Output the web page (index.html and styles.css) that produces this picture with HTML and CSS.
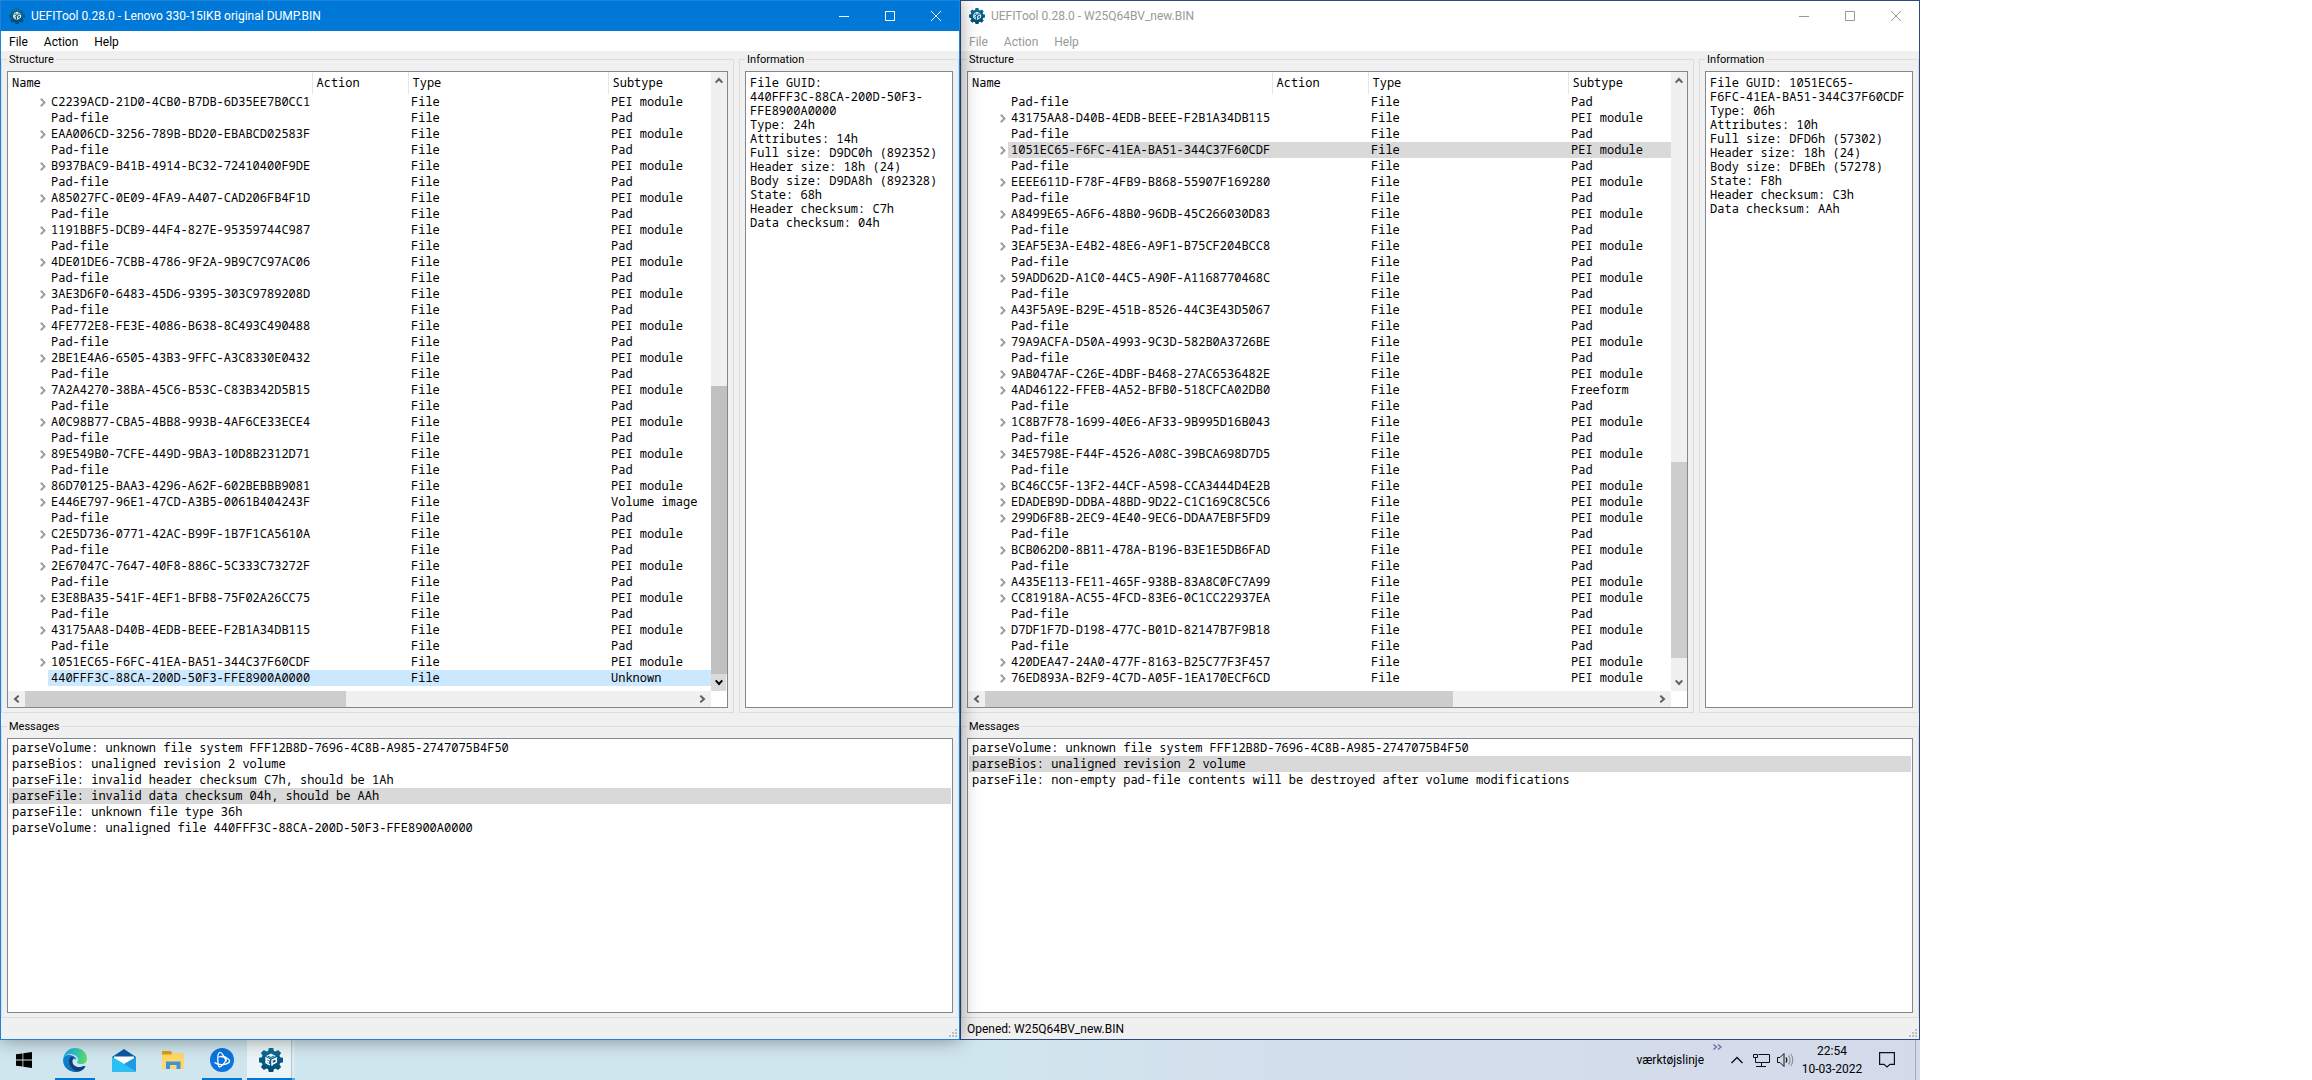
FILE: index.html
```html
<!DOCTYPE html>
<html lang="en">
<head>
<meta charset="utf-8">
<title>UEFITool</title>
<link rel="stylesheet" href="styles.css">
</head>
<body>
<svg class="defs" aria-hidden="true">
  <defs>
    <linearGradient id="gear-fill" x1="0" y1="0" x2="0" y2="1"><stop offset="0" stop-color="#0d7099"/><stop offset="1" stop-color="#004a70"/></linearGradient>
  </defs>
  <symbol id="gear" viewBox="0 0 24 24">
    <path fill="url(#gear-fill)" d="M9.8 0h4.4l.7 2.9 1.7.7L19.100 2.100l3 3-1.600 2.400.7 1.700 2.800.6v4.400l-2.800.7-.7 1.700 1.600 2.500-3 3-2.500-1.600-1.700.7-.7 2.800H9.800l-.7-2.800-1.700-.7-2.500 1.600-3-3 1.600-2.500-.7-1.700L0 14.200V9.800l2.800-.6.7-1.700L1.900 5.100l3-3 2.500 1.500 1.700-.7z"/>
    <path fill="#fff" d="M12 5.600l5 2.500-5 2.500-5-2.500z" opacity=".95"/>
    <path fill="none" stroke="#fff" stroke-width="1.500" d="M10.800 12l-3.700-1.900v4.600l3.700 2.200M7.300 12.800l3 1.400M13 17.800v-5.600l4.300-2v3.900l-3.700 1.900"/>
    <path fill="none" stroke="#0a5f87" d="M9 8.300l3 1.200 3.200-1.500"/>
  </symbol>
  <symbol id="minimize" viewBox="0 0 10 10"><path fill="none" stroke="currentColor" d="M0 5.500h10"/></symbol>
  <symbol id="maximize" viewBox="0 0 10 10"><path fill="none" stroke="currentColor" d="M.5.5h9v9h-9z"/></symbol>
  <symbol id="close" viewBox="0 0 10 10"><path fill="none" stroke="currentColor" d="M0 0l10 10M10 0L0 10"/></symbol>
  <symbol id="chevron-right" viewBox="0 0 6 9"><path fill="none" stroke="currentColor" stroke-width="2" d="M.8.8l3.700 3.700L.8 8.200"/></symbol>
  <symbol id="arrow-up" viewBox="0 0 8 7"><path fill="none" stroke="currentColor" stroke-width="2" d="M.7 5.700L4 2l3.300 3.700"/></symbol>
  <symbol id="arrow-down" viewBox="0 0 8 7"><path fill="none" stroke="currentColor" stroke-width="2" d="M.7 1.300L4 5l3.300-3.700"/></symbol>
  <symbol id="arrow-left" viewBox="0 0 7 8"><path fill="none" stroke="currentColor" stroke-width="2" d="M5.700.7L2 4l3.700 3.300"/></symbol>
  <symbol id="arrow-right" viewBox="0 0 7 8"><path fill="none" stroke="currentColor" stroke-width="2" d="M1.300.7L5 4 1.300 7.300"/></symbol>
  <symbol id="grip" viewBox="0 0 8 8"><path fill="#bfbfbf" d="M6 0h2v2H6zM3 3h2v2H3zM6 3h2v2H6zM0 6h2v2H0zM3 6h2v2H3zM6 6h2v2H6z"/></symbol>
</svg>

<div class="screen">
  <main class="desktop" id="desktop"></main>

  <footer class="taskbar">
    <nav class="apps" aria-label="Taskbar">
      <button class="app" aria-label="Start">
        <svg width="16" height="16" viewBox="0 0 16 16"><path d="M0 2.300L6.500 1.400v6.200H0zM7.300 1.300L16 0v7.600H7.300zM0 8.400h6.500v6.200L0 13.700zM7.300 8.400H16V16l-8.700-1.300z"/></svg>
      </button>
      <button class="app running" aria-label="Microsoft Edge">
        <svg width="24" height="24" viewBox="0 0 24 24">
          <defs>
            <linearGradient id="edge-a" x1="0" y1="0" x2="1" y2="0"><stop offset="0" stop-color="#1fa2e0"/><stop offset=".5" stop-color="#2cc2c9"/><stop offset="1" stop-color="#63de52"/></linearGradient>
            <linearGradient id="edge-b" x1="0" y1="0" x2="1" y2="1"><stop offset="0" stop-color="#1487d8"/><stop offset="1" stop-color="#0b5fa8"/></linearGradient>
          </defs>
          <path fill="url(#edge-b)" d="M.2 11C1.500 6.500 5.500 6.800 8 7.300c4 .8 5.500 3.200 5.300 4.600-.8-1.200-3.600-1.600-4 1-.4 3.600 3 6.300 7 6.300 2.800 0 5.200-1.700 6-1C21 21.800 17 24 12.500 24 5 24-.8 18 .2 11z"/>
          <path fill="#123f78" d="M8.400 8.500C5.500 10 5.600 15 7.500 18c1.800 3 5 5.200 8.300 5.200 3-.7 5.300-2.700 6.500-5-.8-.7-3.200 1-6 1-4 0-7.400-2.700-7-6.300.1-1.500.7-3 1.700-3.700z"/>
          <path fill="url(#edge-a)" d="M.2 11C1 4.500 6 0 12.200 0 19 0 24 5 24 10.500c0 3.600-2.600 5.600-5.700 5.600-2.600 0-4.200-.8-4.200-1.600 0-.6.900-.9.900-2.700 0-3-3-5.600-7.400-5.600C3.500 6.200.9 8.300.2 11z"/>
        </svg>
      </button>
      <button class="app" aria-label="Mail">
        <svg width="24" height="24" viewBox="0 0 24 24"><path fill="#0c59a4" d="M0 9L12 1l12 8v4H0z"/><path fill="#fff" d="M2 8.500h20V13l-10 5L2 13z"/><path fill="#35b8f1" d="M0 9l12 7L24 9v14.500H0z"/><path fill="#1f9be2" d="M0 23.500L24 9v14.500z"/><path fill="#2bc0f5" d="M0 23.500h24L9.500 14.500 0 9z"/></svg>
      </button>
      <button class="app" aria-label="File Explorer">
        <svg width="22" height="20" viewBox="0 0 22 20"><path fill="#dd9c0c" d="M0 1h8.500l1.500 2H22v4H0z"/><path fill="#ffd869" d="M0 4.500h9L10.500 3H22v16H0z"/><path fill="#3d93dc" d="M4 11.500h14.500V19h-4v-4H8v4H4z"/></svg>
      </button>
      <button class="app running" aria-label="Battle.net">
        <svg width="24" height="24" viewBox="0 0 24 24"><circle cx="12" cy="12" r="12" fill="#0b74de"/><g fill="none" stroke="#fff" stroke-width="1.300"><path d="M9 19C7 13 7.500 5.500 9.500 4.500c2-.8 5.300 4.500 6.800 9"/><path d="M4.500 14.500C8 17.300 16.500 17.300 19.300 14c1.500-2.300-3.500-5-8-5.500"/><path d="M8.500 9c4-1.200 8.800-.8 7.500 2.800-1.200 3.400-4.500 7.200-7 7.200"/></g></svg>
      </button>
      <button class="app active" aria-label="UEFITool">
        <svg width="24" height="24"><use href="#gear"/></svg>
      </button>
    </nav>
    <div class="tray">
      <span class="toolbar-name">værktøjslinje</span>
      <button class="more" aria-label="More toolbars"><svg width="9" height="6" viewBox="0 0 9 6"><path fill="none" stroke="#6d6ba8" stroke-width="1.300" d="M.5.5L3.500 3 .5 5.500M5 .5L8 3 5 5.500"/></svg></button>
      <button class="tray-icon" aria-label="Show hidden icons"><svg width="12" height="8" viewBox="0 0 12 8"><path fill="none" stroke="#111" stroke-width="1.400" d="M.5 7L6 1.500 11.500 7"/></svg></button>
      <button class="tray-icon" aria-label="Network"><svg width="17" height="14" viewBox="0 0 17 14"><path fill="none" stroke="#111" d="M5.500 1.500h11v8h-11M3 13.500h10M8.500 10v3M.5 1.500h4v3h-4zM2.500 5v4.500H6"/></svg></button>
      <button class="tray-icon" aria-label="Volume"><svg width="17" height="14" viewBox="0 0 17 14"><path fill="none" stroke="#111" d="M.5 4.500H3l4-4v13l-4-4H.5z"/><path fill="none" stroke="#111" stroke-width="1.200" d="M9 4.500c1 1.500 1 3.500 0 5"/><path fill="none" stroke="#8a90a0" stroke-width="1.200" d="M11.300 2.500c2 2.600 2 6.400 0 9M13.800 1c2.600 3.500 2.600 8.500 0 12"/></svg></button>
      <time class="clock" datetime="2022-03-10T22:54"><span>22:54</span><span>10-03-2022</span></time>
      <button class="tray-icon notices" aria-label="Notifications"><svg width="16" height="16" viewBox="0 0 16 16"><path fill="none" stroke="#111" stroke-width="1.200" d="M.6.600h14.800v11.800H11l-3 2.600-3-2.600H.6z"/></svg></button>
      <button class="show-desktop" aria-label="Show desktop"></button>
    </div>
  </footer>
</div>
<script src="app.js"></script>
</body>
</html>
```
FILE: styles.css
```css
* {
  box-sizing: border-box;
}

body {
  display: grid;
  grid-template-columns: 240fr 49fr;
  margin: 0;
  background: #fff;
  color: #000;
  font: 12px/16px Roboto, "Liberation Sans", sans-serif;
}

button {
  display: grid;
  place-items: center;
  margin: 0;
  padding: 0;
  border: 0;
  background: none;
  color: inherit;
  font: inherit;
}

svg {
  display: block;
}

.defs {
  position: absolute;
  width: 0;
  height: 0;
}

.screen {
  display: grid;
  grid-template-rows: minmax(0, 1fr) auto;
  height: 100vh;
}

.desktop {
  display: grid;
  grid-template-columns: 1fr 1fr;
  min-height: 0;
}

/* Windows */

.window {
  display: flex;
  flex-direction: column;
  min-width: 0;
  min-height: 0;
  border: 1px solid #2b4a7e;
  background: #f0f0f0;
}

.window.focused {
  z-index: 1;
  border-color: #1a83db;
  box-shadow: 0 0 18px rgba(0, 0, 0, 0.4);
}

.titlebar {
  display: flex;
  align-items: center;
  height: 30px;
  padding-left: 8px;
  background: #fff;
  color: #999;
}

.focused .titlebar {
  background: #0078d7;
  color: #fff;
}

.title {
  flex: 1;
  margin: 0 0 0 6px;
  font-size: 12px;
  font-weight: 400;
}

.caption-button {
  width: 46px;
  height: 30px;
}

.menubar {
  display: flex;
  height: 20px;
  background: #fff;
}

.menubar button {
  padding: 2px 8px 0;
}

.window:not(.focused) .menubar {
  color: #999;
}

.panels {
  display: grid;
  flex: 1;
  grid-template-rows: minmax(0, 331fr) minmax(0, 150fr);
  gap: 5px;
  min-height: 0;
}

.upper {
  display: grid;
  grid-template-columns: minmax(0, 10fr) minmax(0, 3fr);
  gap: 5px;
  min-height: 0;
}

.group {
  display: flex;
  min-width: 0;
  min-height: 0;
  margin: 0;
  padding: 4px 5px;
  border: 1px solid #dcdcdc;
}

.group legend {
  height: 16px;
  padding: 1px 2px 0;
  font-size: 11px;
}

.box {
  flex: 1;
  min-width: 0;
  border: 1px solid #828790;
  background: #fff;
  font: 12px/16px "Noto Sans Mono", "DejaVu Sans Mono", monospace;
}

/* Structure tree */

.tree-box {
  display: grid;
  grid-template-columns: minmax(0, 1fr) 16px;
  grid-template-rows: minmax(0, 1fr) 16px;
}

.viewport {
  overflow: hidden;
}

.tree {
  width: 100%;
  border-collapse: collapse;
  table-layout: fixed;
}

.tree th {
  height: 22px;
  padding: 0 4px;
  border-right: 1px solid #e5e5e5;
  font-weight: 400;
  text-align: left;
}

.tree th:last-child {
  border-right: 0;
}

.col-name { width: 304px; }
.col-action { width: 96px; }
.col-type { width: 200px; }

.tree td {
  height: 16px;
  padding: 0 3px;
  white-space: nowrap;
}

.tree td:first-child {
  padding: 0 0 0 28px;
}

.node {
  display: flex;
}

.expander {
  width: 12px;
  height: 16px;
  padding-left: 1px;
  color: #a0a0a0;
}

.node-name {
  flex: 1;
  padding-left: 3px;
}

.tree .selected .node-name,
.tree .selected td:not(:first-child) {
  background: #d9d9d9;
}

.focused .tree .selected .node-name,
.focused .tree .selected td:not(:first-child) {
  background: #cce8ff;
}

.scrollbar {
  display: flex;
  background: #f0f0f0;
  color: #606060;
}

.scrollbar.vertical {
  flex-direction: column;
}

.scrollbar button {
  flex: none;
  width: 17px;
  height: 15px;
}

.scrollbar.vertical button {
  width: 15px;
  height: 17px;
}

.track {
  display: flex;
  flex: 1;
}

.vertical .track {
  flex-direction: column;
}

.thumb {
  background: #cdcdcd;
}

.focused .vertical .thumb {
  background: #c0c0c0;
}

.focused .vertical .down {
  background: #dadada;
  color: #000;
}

/* Information and messages */

.info {
  display: block;
  width: 100%;
  padding: 4px;
  outline: 0;
  resize: none;
  overflow: hidden;
  border-radius: 0;
  line-height: 14px;
  color: #000;
}

.messages {
  margin: 0;
  padding: 1px;
  list-style: none;
}

.messages li {
  padding: 0 3px;
}

.messages .selected {
  background: #d9d9d9;
}

.statusbar {
  display: flex;
  align-items: center;
  justify-content: space-between;
  height: 21px;
  padding: 0 2px 0 6px;
}

.statusbar svg {
  align-self: flex-end;
  margin-bottom: 2px;
}

/* Taskbar */

.taskbar {
  display: flex;
  justify-content: space-between;
  height: 40px;
  background: linear-gradient(90deg, #cfe6ee, #d0e6ef 52%, #d3dfec 65%, #d4daea);
}

.apps {
  display: flex;
  gap: 1px;
}

.app {
  width: 48px;
  height: 40px;
}

.app:first-child {
  margin-right: 2px;
}

.app.running {
  background: linear-gradient(#0078d7, #0078d7) center bottom / 40px 2px no-repeat;
}

/* The lighter strip at the right edge stands for the second window of the group. */
.app.active {
  background:
    linear-gradient(90deg, #0078d7 45px, #5ba6e2 45px) left bottom / 100% 2px no-repeat,
    linear-gradient(90deg, #ebf5f8 44px, #b4c8d2 44px 45px, #dcebf1 45px);
}

.tray {
  display: flex;
  align-items: center;
}

.toolbar-name {
  margin-right: 5px;
}

.more {
  align-self: flex-start;
  width: 16px;
  height: 13px;
}

.tray-icon {
  width: 24px;
  height: 40px;
}

.clock {
  display: flex;
  flex-direction: column;
  width: 70px;
  line-height: 18px;
  text-align: center;
}

.notices {
  width: 40px;
}

.show-desktop {
  width: 5px;
  height: 40px;
  margin-left: 8px;
  border-left: 1px solid #a3abbd;
}
```
FILE: app.js
```js
// Each tree entry is a GUID, "-" for a pad file, or [GUID, subtype] when it is not a PEI module.
const windows = [
  {
    title: "UEFITool 0.28.0 - Lenovo 330-15IKB original DUMP.BIN",
    focused: true,
    tree: [
      "C2239ACD-21D0-4CB0-B7DB-6D35EE7B0CC1", "-",
      "EAA006CD-3256-789B-BD20-EBABCD02583F", "-",
      "B937BAC9-B41B-4914-BC32-72410400F9DE", "-",
      "A85027FC-0E09-4FA9-A407-CAD206FB4F1D", "-",
      "1191BBF5-DCB9-44F4-827E-95359744C987", "-",
      "4DE01DE6-7CBB-4786-9F2A-9B9C7C97AC06", "-",
      "3AE3D6F0-6483-45D6-9395-303C9789208D", "-",
      "4FE772E8-FE3E-4086-B638-8C493C490488", "-",
      "2BE1E4A6-6505-43B3-9FFC-A3C8330E0432", "-",
      "7A2A4270-38BA-45C6-B53C-C83B342D5B15", "-",
      "A0C98B77-CBA5-4BB8-993B-4AF6CE33ECE4", "-",
      "89E549B0-7CFE-449D-9BA3-10D8B2312D71", "-",
      "86D70125-BAA3-4296-A62F-602BEBBB9081",
      ["E446E797-96E1-47CD-A3B5-0061B404243F", "Volume image"], "-",
      "C2E5D736-0771-42AC-B99F-1B7F1CA5610A", "-",
      "2E67047C-7647-40F8-886C-5C333C73272F", "-",
      "E3E8BA35-541F-4EF1-BFB8-75F02A26CC75", "-",
      "43175AA8-D40B-4EDB-BEEE-F2B1A34DB115", "-",
      "1051EC65-F6FC-41EA-BA51-344C37F60CDF",
      ["440FFF3C-88CA-200D-50F3-FFE8900A0000", "Unknown"]
    ],
    selectedNode: 36,
    vertical: [296, 288, 0],
    horizontal: [0, 321, 348],
    info: [
      "File GUID:", "440FFF3C-88CA-200D-50F3-", "FFE8900A0000", "Type: 24h", "Attributes: 14h",
      "Full size: D9DC0h (892352)", "Header size: 18h (24)", "Body size: D9DA8h (892328)",
      "State: 68h", "Header checksum: C7h", "Data checksum: 04h"
    ],
    messages: [
      "parseVolume: unknown file system FFF12B8D-7696-4C8B-A985-2747075B4F50",
      "parseBios: unaligned revision 2 volume",
      "parseFile: invalid header checksum C7h, should be 1Ah",
      "parseFile: invalid data checksum 04h, should be AAh",
      "parseFile: unknown file type 36h",
      "parseVolume: unaligned file 440FFF3C-88CA-200D-50F3-FFE8900A0000"
    ],
    selectedMessage: 3,
    status: ""
  },
  {
    title: "UEFITool 0.28.0 - W25Q64BV_new.BIN",
    focused: false,
    tree: [
      "-", "43175AA8-D40B-4EDB-BEEE-F2B1A34DB115",
      "-", "1051EC65-F6FC-41EA-BA51-344C37F60CDF",
      "-", "EEEE611D-F78F-4FB9-B868-55907F169280",
      "-", "A8499E65-A6F6-48B0-96DB-45C266030D83",
      "-", "3EAF5E3A-E4B2-48E6-A9F1-B75CF204BCC8",
      "-", "59ADD62D-A1C0-44C5-A90F-A1168770468C",
      "-", "A43F5A9E-B29E-451B-8526-44C3E43D5067",
      "-", "79A9ACFA-D50A-4993-9C3D-582B0A3726BE",
      "-", "9AB047AF-C26E-4DBF-B468-27AC6536482E",
      ["4AD46122-FFEB-4A52-BFB0-518CFCA02DB0", "Freeform"],
      "-", "1C8B7F78-1699-40E6-AF33-9B995D16B043",
      "-", "34E5798E-F44F-4526-A08C-39BCA698D7D5",
      "-", "BC46CC5F-13F2-44CF-A598-CCA3444D4E2B",
      "EDADEB9D-DDBA-48BD-9D22-C1C169C8C5C6",
      "299D6F8B-2EC9-4E40-9EC6-DDAA7EBF5FD9",
      "-", "BCB062D0-8B11-478A-B196-B3E1E5DB6FAD",
      "-", "A435E113-FE11-465F-938B-83A8C0FC7A99",
      "CC81918A-AC55-4FCD-83E6-0C1CC22937EA",
      "-", "D7DF1F7D-D198-477C-B01D-82147B7F9B18",
      "-", "420DEA47-24A0-477F-8163-B25C77F3F457",
      "76ED893A-B2F9-4C7D-A05F-1EA170ECF6CD"
    ],
    selectedNode: 3,
    vertical: [372, 196, 16],
    horizontal: [0, 468, 201],
    info: [
      "File GUID: 1051EC65-", "F6FC-41EA-BA51-344C37F60CDF", "Type: 06h", "Attributes: 10h",
      "Full size: DFD6h (57302)", "Header size: 18h (24)", "Body size: DFBEh (57278)",
      "State: F8h", "Header checksum: C3h", "Data checksum: AAh"
    ],
    messages: [
      "parseVolume: unknown file system FFF12B8D-7696-4C8B-A985-2747075B4F50",
      "parseBios: unaligned revision 2 volume",
      "parseFile: non-empty pad-file contents will be destroyed after volume modifications"
    ],
    selectedMessage: 1,
    status: "Opened: W25Q64BV_new.BIN"
  }
];

const icon = (name, width, height = width) =>
  `<svg width="${width}" height="${height}"><use href="#${name}"/></svg>`;

const treeRow = (entry, selected) => {
  const pad = entry === "-";
  const [name, subtype] = Array.isArray(entry) ? entry : pad ? ["Pad-file", "Pad"] : [entry, "PEI module"];
  const leaf = pad || subtype === "Unknown";
  const expander = leaf
    ? '<span class="expander"></span>'
    : `<button class="expander" aria-label="Expand">${icon("chevron-right", 6, 9)}</button>`;
  return `<tr${selected ? ' class="selected"' : ""}>
    <td><div class="node">${expander}<span class="node-name">${name}</span></div></td>
    <td></td><td>File</td><td>${subtype}</td></tr>`;
};

// A scrollbar's extents are the shares of track before, under and after the thumb.
const scrollbar = (kind, start, end, [before, size, after]) => `
  <div class="scrollbar ${kind}">
    <button class="${start}" aria-label="Scroll ${start}">${kind === "vertical" ? icon("arrow-" + start, 8, 7) : icon("arrow-" + start, 7, 8)}</button>
    <div class="track"><div style="flex:${before}"></div><div class="thumb" style="flex:${size}"></div><div style="flex:${after}"></div></div>
    <button class="${end}" aria-label="Scroll ${end}">${kind === "vertical" ? icon("arrow-" + end, 8, 7) : icon("arrow-" + end, 7, 8)}</button>
  </div>`;

const render = (w, index) => `
  <section class="window${w.focused ? " focused" : ""}">
    <header class="titlebar">
      ${icon("gear", 16)}
      <h1 class="title">${w.title}</h1>
      <button class="caption-button" aria-label="Minimize">${icon("minimize", 10)}</button>
      <button class="caption-button" aria-label="Maximize">${icon("maximize", 10)}</button>
      <button class="caption-button" aria-label="Close">${icon("close", 10)}</button>
    </header>
    <nav class="menubar"><button>File</button><button>Action</button><button>Help</button></nav>
    <div class="panels">
      <div class="upper">
        <fieldset class="group">
          <legend>Structure</legend>
          <div class="box tree-box">
            <div class="viewport">
              <table class="tree">
                <colgroup><col class="col-name"><col class="col-action"><col class="col-type"><col></colgroup>
                <thead><tr><th>Name</th><th>Action</th><th>Type</th><th>Subtype</th></tr></thead>
                <tbody>${w.tree.map((entry, i) => treeRow(entry, i === w.selectedNode)).join("")}</tbody>
              </table>
            </div>
            ${scrollbar("vertical", "up", "down", w.vertical)}
            ${scrollbar("horizontal", "left", "right", w.horizontal)}
          </div>
        </fieldset>
        <fieldset class="group">
          <legend id="info-label-${index}">Information</legend>
          <textarea class="box info" readonly aria-labelledby="info-label-${index}">${w.info.join("\n")}</textarea>
        </fieldset>
      </div>
      <fieldset class="group">
        <legend>Messages</legend>
        <ul class="box messages">${w.messages.map((m, i) => `<li${i === w.selectedMessage ? ' class="selected"' : ""}>${m}</li>`).join("")}</ul>
      </fieldset>
    </div>
    <footer class="statusbar"><span>${w.status}</span>${icon("grip", 8)}</footer>
  </section>`;

document.getElementById("desktop").innerHTML = windows.map(render).join("");
```
